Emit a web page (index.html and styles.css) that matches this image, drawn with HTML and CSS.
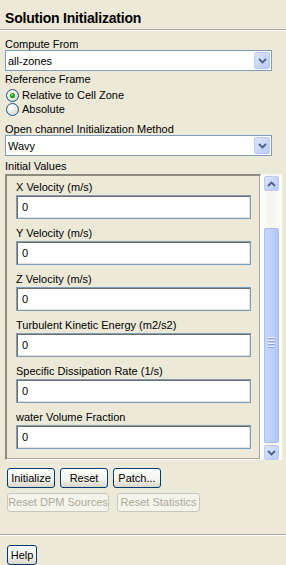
FILE: index.html
```html
<!DOCTYPE html>
<html>
<head>
<title>Solution Initialization</title>
<link rel="stylesheet" href="styles.css">
</head>
<body>
<div class="title">Solution Initialization</div>
<div class="rule"></div>

<div class="content">
    <div class="label first">Compute From</div>
    <div class="combo">
        <span class="combo-text">all-zones</span>
        <span class="drop"><svg width="9" height="6" viewBox="0 0 9 6"><path d="M1 1 L4.5 4.5 L8 1" fill="none" stroke="#4d6185" stroke-width="1.8"/></svg></span>
    </div>

    <div class="label ref">Reference Frame</div>
    <div class="radio">
        <svg width="13" height="13" viewBox="0 0 13 13">
            <defs><radialGradient id="rg1" cx="0.35" cy="0.3" r="0.8"><stop offset="0" stop-color="#ffffff"/><stop offset="1" stop-color="#d5d4cc"/></radialGradient></defs>
            <circle cx="6.5" cy="6.5" r="6" fill="url(#rg1)" stroke="#1c5180"/>
            <circle cx="6.5" cy="6.5" r="2.6" fill="#21a121"/>
            <circle cx="6" cy="6" r="1" fill="#7fd87f"/>
        </svg>
        <span>Relative to Cell Zone</span>
    </div>
    <div class="radio">
        <svg width="13" height="13" viewBox="0 0 13 13">
            <defs><radialGradient id="rg2" cx="0.35" cy="0.3" r="0.8"><stop offset="0" stop-color="#ffffff"/><stop offset="1" stop-color="#d5d4cc"/></radialGradient></defs>
            <circle cx="6.5" cy="6.5" r="6" fill="url(#rg2)" stroke="#1c5180"/>
        </svg>
        <span>Absolute</span>
    </div>

    <div class="label">Open channel Initialization Method</div>
    <div class="combo">
        <span class="combo-text">Wavy</span>
        <span class="drop"><svg width="9" height="6" viewBox="0 0 9 6"><path d="M1 1 L4.5 4.5 L8 1" fill="none" stroke="#4d6185" stroke-width="1.8"/></svg></span>
    </div>

    <div class="label init">Initial Values</div>
    <div class="values-row">
        <div class="frame">
            <div class="field">
                <div class="flabel">X Velocity (m/s)</div>
                <div class="textbox">0</div>
            </div>
            <div class="field">
                <div class="flabel">Y Velocity (m/s)</div>
                <div class="textbox">0</div>
            </div>
            <div class="field">
                <div class="flabel">Z Velocity (m/s)</div>
                <div class="textbox">0</div>
            </div>
            <div class="field">
                <div class="flabel">Turbulent Kinetic Energy (m2/s2)</div>
                <div class="textbox">0</div>
            </div>
            <div class="field">
                <div class="flabel">Specific Dissipation Rate (1/s)</div>
                <div class="textbox">0</div>
            </div>
            <div class="field">
                <div class="flabel">water Volume Fraction</div>
                <div class="textbox">0</div>
            </div>
        </div>
        <div class="scrollbar">
            <div class="sbtn"><svg width="9" height="6" viewBox="0 0 9 6"><path d="M1 5 L4.5 1.5 L8 5" fill="none" stroke="#4d6185" stroke-width="1.8"/></svg></div>
            <div class="track">
                <div class="thumb">
                    <div class="grip"><i></i><i></i><i></i><i></i></div>
                </div>
            </div>
            <div class="sbtn"><svg width="9" height="6" viewBox="0 0 9 6"><path d="M1 1 L4.5 4.5 L8 1" fill="none" stroke="#4d6185" stroke-width="1.8"/></svg></div>
        </div>
    </div>

    <div class="buttons">
        <div class="btn">Initialize</div>
        <div class="btn">Reset</div>
        <div class="btn">Patch...</div>
    </div>
    <div class="buttons second">
        <div class="btn disabled wide">Reset DPM Sources</div>
        <div class="btn disabled stats">Reset Statistics</div>
    </div>
</div>

<div class="rule bottom"></div>
<div class="content">
    <div class="btn help">Help</div>
</div>
</body>
</html>
```

FILE: styles.css
```css
body {
    margin: 0;
    background-color: #ece9d8;
    font-family: "Liberation Sans", Arial, sans-serif;
    font-size: 11px;
    color: #000;
    width: 286px;
    height: 565px;
    overflow: hidden;
}

.title {
    padding: 10px 5px 0;
    height: 16px;
    line-height: 16px;
    font-size: 14px;
    font-weight: bold;
    letter-spacing: -0.2px;
    margin-bottom: 3px;
}

.rule {
    border-top: 1px solid #aca899;
    border-bottom: 1px solid #ffffff;
}

.rule.bottom {
    margin-top: 22px;
}

.content {
    padding: 0 5px;
}

.label {
    line-height: 12px;
    height: 12px;
    margin-top: 7px;
}

.label.ref {
    margin-top: 2px;
    margin-bottom: 3px;
}

.label.init {
    margin-top: 4px;
    margin-bottom: 2px;
}

.combo {
    width: 267px;
    height: 21px;
    box-sizing: border-box;
    border: 1px solid #7f9db9;
    background: #fff;
    display: flex;
    align-items: center;
    justify-content: space-between;
}

.combo-text {
    padding-left: 2px;
}

.drop {
    width: 16px;
    height: 17px;
    margin-right: 1px;
    box-sizing: border-box;
    border: 1px solid #b9cbf3;
    border-radius: 2px;
    background: linear-gradient(135deg, #dce6fd, #b6cafa);
    display: flex;
    align-items: center;
    justify-content: center;
}

.radio {
    height: 14px;
    display: flex;
    align-items: center;
    gap: 3px;
}

.radio svg {
    margin-left: 1px;
}

.values-row {
    display: flex;
    width: 277px;
    height: 286px;
}

.frame {
    width: 256px;
    box-sizing: border-box;
    border-top: 2px solid #8d8a7f;
    border-left: 2px solid #8d8a7f;
    border-right: 1px solid #ffffff;
    border-bottom: 1px solid #ffffff;
    box-shadow: inset -1px -1px 0 #aca899;
    padding: 5px 9px 0 9px;
    overflow: hidden;
}

.field {
    margin-bottom: 8px;
}

.flabel {
    line-height: 13px;
    height: 13px;
    margin-bottom: 1px;
}

.textbox {
    height: 24px;
    box-sizing: border-box;
    border: 1px solid #7f9db9;
    background: #fff;
    box-shadow: inset 1px 1px 0 #6f6d66, inset -1px -1px 0 #e4e2d8;
    line-height: 22px;
    padding-left: 5px;
}

.scrollbar {
    width: 21px;
    box-sizing: border-box;
    padding: 2px 3px 0 3px;
    background: linear-gradient(90deg, #ffffff, #f4f3ee 40%, #fdfdfb);
    display: flex;
    flex-direction: column;
}

.sbtn {
    height: 15px;
    box-sizing: border-box;
    border: 1px solid #b9cbf3;
    border-radius: 2px;
    background: linear-gradient(135deg, #dce6fd, #b6cafa);
    display: flex;
    align-items: center;
    justify-content: center;
}

.track {
    flex: 1;
    padding: 37px 0 2px;
    display: flex;
}

.thumb {
    flex: 1;
    box-sizing: border-box;
    border: 1px solid #a8bdf3;
    border-radius: 2px;
    background: linear-gradient(90deg, #c7d6fd, #bccefd 60%, #b0c4f8);
    display: flex;
    align-items: center;
    justify-content: center;
}

.grip {
    margin-top: 15px;
}

.grip i {
    display: block;
    width: 7px;
    height: 1px;
    margin-bottom: 1px;
    background: #eef2fe;
    border-bottom: 1px solid #8ca6e8;
}

.buttons {
    display: flex;
    gap: 5px;
    margin-top: 8px;
    padding-left: 2px;
}

.buttons.second {
    margin-top: 5px;
    gap: 8px;
}

.btn {
    width: 48px;
    height: 20px;
    box-sizing: border-box;
    border: 1px solid #003c74;
    border-radius: 3px;
    background: linear-gradient(#ffffff, #f3f2ec 60%, #d9d5c8);
    text-align: center;
    line-height: 18px;
}

.btn.disabled {
    border-color: #c9c7ba;
    background: #f5f4ea;
    color: #aca899;
    height: 19px;
    line-height: 17px;
}

.btn.wide {
    width: 102px;
}

.btn.stats {
    width: 83px;
}

.btn.help {
    width: 30px;
    margin-top: 9px;
    margin-left: 2px;
}
```
